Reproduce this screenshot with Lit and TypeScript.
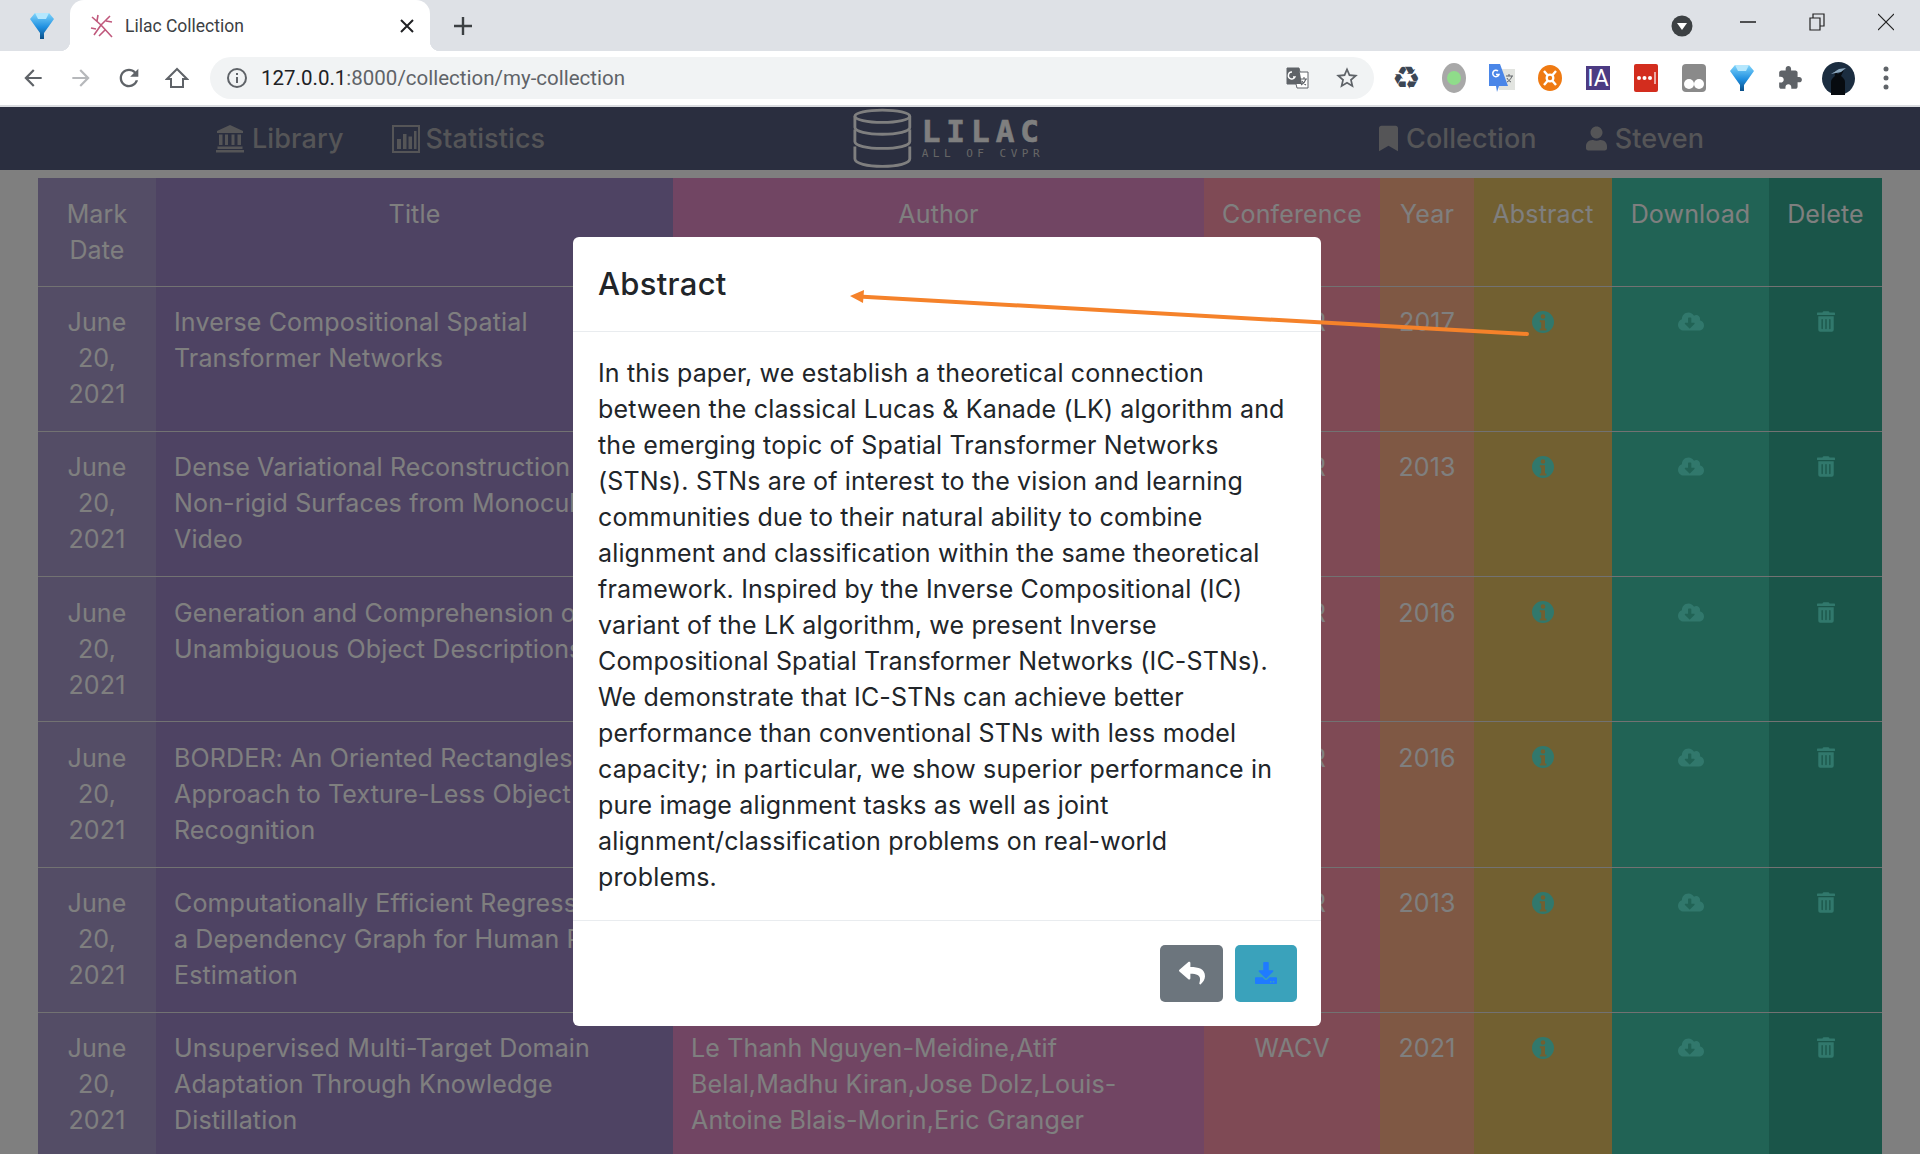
import { LitElement, css, html, svg } from 'lit'
import { customElement } from 'lit/decorators.js'

interface Paper {
  title: string[]
  author: string[]
  conf: string
  year: string
}

const papers: Paper[] = [
  { title: ['Inverse Compositional Spatial', 'Transformer Networks'], author: [], conf: 'CVPR', year: '2017' },
  {
    title: ['Dense Variational Reconstruction of', 'Non-rigid Surfaces from Monocular', 'Video'],
    author: [],
    conf: 'CVPR',
    year: '2013',
  },
  { title: ['Generation and Comprehension of', 'Unambiguous Object Descriptions'], author: [], conf: 'CVPR', year: '2016' },
  {
    title: ['BORDER: An Oriented Rectangles', 'Approach to Texture-Less Object', 'Recognition'],
    author: [],
    conf: 'CVPR',
    year: '2016',
  },
  {
    title: ['Computationally Efficient Regression on', 'a Dependency Graph for Human Pose', 'Estimation'],
    author: [],
    conf: 'CVPR',
    year: '2013',
  },
  {
    title: ['Unsupervised Multi-Target Domain', 'Adaptation Through Knowledge', 'Distillation'],
    author: ['Le Thanh Nguyen-Meidine,Atif', 'Belal,Madhu Kiran,Jose Dolz,Louis-', 'Antoine Blais-Morin,Eric Granger'],
    conf: 'WACV',
    year: '2021',
  },
]

const abstractLines = [
  'In this paper, we establish a theoretical connection',
  'between the classical Lucas & Kanade (LK) algorithm and',
  'the emerging topic of Spatial Transformer Networks',
  '(STNs). STNs are of interest to the vision and learning',
  'communities due to their natural ability to combine',
  'alignment and classification within the same theoretical',
  'framework. Inspired by the Inverse Compositional (IC)',
  'variant of the LK algorithm, we present Inverse',
  'Compositional Spatial Transformer Networks (IC-STNs).',
  'We demonstrate that IC-STNs can achieve better',
  'performance than conventional STNs with less model',
  'capacity; in particular, we show superior performance in',
  'pure image alignment tasks as well as joint',
  'alignment/classification problems on real-world',
  'problems.',
]

const icon = (w: number, h: number, vw: number, vh: number, d: string) => html`
  <svg class="ic" width=${w} height=${h} viewBox="0 0 ${vw} ${vh}" fill="currentColor" fill-rule="evenodd"><path d=${d}></path></svg>
`

const INFO =
  'M11 0a11 11 0 1 0 0 22a11 11 0 1 0 0-22zM11 3.200a2.300 2.300 0 1 1 0 4.600a2.300 2.300 0 1 1 0-4.600zM7.800 9.200h5.200v8.200h1.400v2H7.800v-2h1.400v-6.200H7.800z'
const CLOUD =
  'M537.6 226.6c4.1-10.7 6.4-22.4 6.4-34.6 0-53-43-96-96-96-19.7 0-38.1 6-53.3 16.2C367 64.2 315.3 32 256 32c-88.4 0-160 71.6-160 160 0 2.7.1 5.4.2 8.1C40.2 219.8 0 273.2 0 336c0 79.5 64.5 144 144 144h368c70.7 0 128-57.3 128-128 0-61.9-44-113.6-102.4-125.4zm-132.9 88.7L299.3 420.7c-6.2 6.2-16.4 6.2-22.6 0L171.3 315.3c-10.1-10.1-2.9-27.3 11.3-27.3H248V176c0-8.8 7.2-16 16-16h48c8.8 0 16 7.2 16 16v112h65.4c14.2 0 21.4 17.2 11.3 27.3z'
const TRASH =
  'M32 464a48 48 0 0 0 48 48h288a48 48 0 0 0 48-48V128H32zm272-256a16 16 0 0 1 32 0v224a16 16 0 0 1-32 0zm-96 0a16 16 0 0 1 32 0v224a16 16 0 0 1-32 0zm-96 0a16 16 0 0 1 32 0v224a16 16 0 0 1-32 0zM432 32H312l-9.4-18.7A24 24 0 0 0 281.1 0H166.8a23.72 23.72 0 0 0-21.4 13.3L136 32H16A16 16 0 0 0 0 48v32a16 16 0 0 0 16 16h416a16 16 0 0 0 16-16V48a16 16 0 0 0-16-16z'
const BOOKMARK = 'M0 512V48C0 21.49 21.49 0 48 0h288c26.51 0 48 21.49 48 48v464L192 400 0 512z'
const USER =
  'M224 256c70.7 0 128-57.3 128-128S294.7 0 224 0 96 57.3 96 128s57.3 128 128 128zm89.6 32h-16.7c-22.2 10.2-46.9 16-72.9 16s-50.6-5.8-72.9-16h-16.7C60.2 288 0 348.2 0 422.4V464c0 26.5 21.5 48 48 48h352c26.5 0 48-21.5 48-48v-41.6c0-74.2-60.2-134.4-134.4-134.4z'
const REPLY =
  'M8.309 189.836L184.313 37.851C199.719 24.546 224 35.347 224 56.015v80.053c160.629 1.839 288 34.032 288 186.258 0 61.441-39.581 122.309-83.333 154.132-13.653 9.931-33.111-2.533-28.077-18.631 45.344-145.012-21.507-183.51-176.59-185.742V360c0 20.7-24.3 31.453-39.687 18.164l-176.004-152c-11.071-9.562-11.086-26.753 0-36.328z'
const DOWNLOAD =
  'M216 0h80c13.3 0 24 10.7 24 24v168h87.7c17.8 0 26.7 21.5 14.1 34.1L269.7 378.3c-7.5 7.5-19.8 7.5-27.3 0L90.1 226.1c-12.6-12.6-3.7-34.1 14.1-34.1H192V24c0-13.3 10.7-24 24-24zM512 376v112c0 13.3-10.7 24-24 24H24c-13.3 0-24-10.7-24-24V376c0-13.3 10.7-24 24-24h146.7l49 49c20.1 20.1 52.5 20.1 72.6 0l49-49H488c13.3 0 24 10.7 24 24zM388 464c0-11-9-20-20-20s-20 9-20 20 9 20 20 20 20-9 20-20zM452 464c0-11-9-20-20-20s-20 9-20 20 9 20 20 20 20-9 20-20z'
const BANK =
  'M14 1L1 7v2h26V7L14 1zM3 10.500h3.500V21H3zM9 10.500h3V21H9zM15.500 10.500h3V21h-3zM21.500 10.500H25V21h-3.500zM1.500 22.500h25V25h-25zM0 26h28v2.500H0z'
const CHART =
  'M0 0h28v28H0zM2 2v24h24V2zM5 14h4v10H5zM11 9h3.500v15H11zM16.500 11.500H20V24h-3.500zM22 6h2.500v18H22z'
const BACK = 'M20 11H7.830l5.590-5.590L12 4l-8 8 8 8 1.410-1.410L7.830 13H20v-2z'
const FORWARD = 'M4 11h12.170l-5.590-5.590L12 4l8 8-8 8-1.410-1.410L16.170 13H4v-2z'
const RELOAD =
  'M17.650 6.350C16.200 4.900 14.210 4 12 4c-4.420 0-7.990 3.580-7.990 8s3.570 8 7.990 8c3.730 0 6.840-2.550 7.730-6h-2.080c-.82 2.330-3.040 4-5.650 4-3.310 0-6-2.690-6-6s2.690-6 6-6c1.660 0 3.140.69 4.220 1.780L13 11h7V4l-2.350 2.350z'
const STAR =
  'M22 9.240l-7.190-.62L12 2 9.190 8.630 2 9.240l5.460 4.730L5.820 21 12 17.270 18.180 21l-1.630-7.030L22 9.240zM12 15.400l-3.760 2.270 1-4.280-3.320-2.880 4.380-.38L12 6.100l1.710 4.040 4.380.38-3.320 2.880 1 4.280L12 15.400z'
const PUZZLE =
  'M20.500 11H19V7c0-1.100-.9-2-2-2h-4V3.500C13 2.120 11.880 1 10.500 1S8 2.120 8 3.500V5H4c-1.100 0-1.990.9-1.990 2v3.800H3.500c1.490 0 2.700 1.210 2.700 2.700s-1.210 2.700-2.700 2.700H2V20c0 1.100.9 2 2 2h3.800v-1.500c0-1.490 1.210-2.700 2.700-2.700 1.490 0 2.700 1.210 2.700 2.700V22H17c1.100 0 2-.9 2-2v-4h1.500c1.380 0 2.500-1.120 2.500-2.500S21.880 11 20.500 11z'

const funnel = (id: string) => html`
  <svg width="24" height="30" viewBox="0 0 24 30">
    <defs>
      ${svg`<linearGradient id=${id} x1="0" y1="0" x2="0" y2="1">
        <stop offset="0" stop-color="#7fd4fb"></stop>
        <stop offset="0.55" stop-color="#1f8fe0"></stop>
        <stop offset="1" stop-color="#0b4f88"></stop>
      </linearGradient>`}
    </defs>
    <path d="M5 2h14l5 6-10 14v6h-4v-6L0 8z" fill="url(#${id})"></path>
    <path d="M5 2h14l-3 6H8z" fill="#b5e7fd"></path>
  </svg>
`

@customElement('app-root')
export class AppRoot extends LitElement {
  static styles = css`
    :host {
      display: block;
      position: relative;
      width: 1920px;
      height: 1154px;
      overflow: hidden;
      background: #fff;
      font-family: Inter, 'Noto Sans', sans-serif;
      color: #212529;
    }

    .ic {
      display: block;
      flex: none;
    }

    .tabs {
      display: flex;
      align-items: stretch;
      height: 51px;
      background: #dee1e6;
    }

    .pinned {
      display: flex;
      align-items: center;
      justify-content: center;
      width: 70px;
      padding-left: 14px;
      box-sizing: border-box;
    }

    .tab {
      position: relative;
      display: flex;
      align-items: center;
      width: 360px;
      padding: 0 16px 0 20px;
      box-sizing: border-box;
      background: #fff;
      border-radius: 14px 14px 0 0;
      font: 17.500px Roboto, sans-serif;
      color: #3c4043;
    }

    .tab::before,
    .tab::after {
      content: '';
      position: absolute;
      bottom: 0;
      width: 10px;
      height: 10px;
    }

    .tab::before {
      left: -10px;
      background: radial-gradient(circle at 0 0, #dee1e6 10px, #fff 10.500px);
    }

    .tab::after {
      right: -10px;
      background: radial-gradient(circle at 100% 0, #dee1e6 10px, #fff 10.500px);
    }

    .tab .name {
      flex: 1;
      margin-left: 11px;
    }

    .new-tab {
      display: flex;
      align-items: center;
      justify-content: center;
      width: 40px;
      margin-left: 13px;
    }

    .spacer {
      flex: 1;
    }

    .win {
      display: flex;
      align-items: center;
      justify-content: center;
      width: 69px;
      padding-bottom: 7px;
    }

    .profile-arrow {
      display: flex;
      align-items: center;
      justify-content: center;
      margin-right: 20px;
    }

    .toolbar {
      display: flex;
      align-items: center;
      height: 54px;
      padding-left: 9px;
      background: #fff;
      border-bottom: 2px solid #dadce0;
      color: #5f6368;
    }

    .tool {
      display: flex;
      align-items: center;
      justify-content: center;
      width: 48px;
      height: 48px;
      flex: none;
    }

    .tool.off {
      color: #b6b8bb;
    }

    .tool.star {
      width: 54px;
      margin-left: 10px;
    }

    .pill {
      display: flex;
      align-items: center;
      width: 1164px;
      height: 42px;
      margin: 0 8px 0 9px;
      padding-left: 16px;
      box-sizing: border-box;
      border-radius: 21px;
      background: #f1f3f4;
      font: 20.500px Roboto, sans-serif;
      color: #5f6368;
    }

    .pill .url {
      flex: 1;
      margin-left: 13px;
    }

    .pill .url b {
      font-weight: 400;
      color: #202124;
    }

    .recycle {
      font: 32px 'DejaVu Sans', sans-serif;
      color: #3c4654;
    }

    .ia {
      display: flex;
      align-items: center;
      justify-content: center;
      width: 24px;
      height: 24px;
      background: #4c3b83;
      color: #fff;
      font: 23px Roboto, sans-serif;
    }

    .site {
      position: relative;
      height: 1047px;
      overflow: hidden;
      background: #fff;
    }

    .nav {
      display: flex;
      align-items: center;
      height: 63px;
      padding-left: 216px;
      background: #545c7e;
      color: #aaaaae;
      font-size: 27px;
      letter-spacing: 0.100px;
      font-weight: 500;
    }

    .nav-item {
      display: flex;
      align-items: center;
      gap: 8px;
    }

    .nav-item.stat {
      gap: 6px;
    }

    .nav-left {
      display: flex;
      gap: 48px;
      width: 637px;
    }

    .nav-right {
      display: flex;
      gap: 49px;
      margin-left: 334px;
    }

    .logo {
      display: flex;
      align-items: flex-start;
      gap: 10px;
      width: 192px;
      height: 63px;
      color: #fff;
    }

    .logo-text {
      display: flex;
      flex-direction: column;
      padding-top: 9px;
      white-space: nowrap;
    }

    .logo-name {
      font: bold 31px/30px 'DejaVu Sans Mono', monospace;
      letter-spacing: 6px;
      -webkit-text-stroke: 0.600px #fff;
      color: #fff;
    }

    .logo-sub {
      margin-top: 1px;
      font: 11px/13px 'DejaVu Sans Mono', monospace;
      letter-spacing: 4.500px;
      color: #ccc;
    }

    .table {
      margin: 8px 0 0 38px;
      width: 1844px;
      font-size: 25px;
      letter-spacing: 0.150px;
      line-height: 36px;
      color: #fff;
    }

    .row {
      display: grid;
      grid-template-columns: 118px 517px 531px 176px 94px 138px 157px 113px;
      height: 145.300px;
      box-sizing: border-box;
      border-bottom: 1px solid #e4e4e4;
    }

    .row.head {
      height: 108.500px;
    }

    .cell {
      padding: 17.500px 18px 18px;
      white-space: nowrap;
      overflow: hidden;
    }

    .center {
      text-align: center;
    }

    .c0 { background: #a89acc; }
    .c1 { background: #9c86c6; }
    .c2 { background: #e28ac6; }
    .c3 { background: #fe94aa; }
    .c4 { background: #feb088; }
    .c5 { background: #e4c062; }
    .c6 { background: #42c6aa; }
    .c7 { background: #34aa92; }

    .glyph {
      display: flex;
      align-items: center;
      justify-content: center;
      height: 35px;
      color: #62f0d8;
    }

    .backdrop {
      position: absolute;
      inset: 0;
      background: rgb(0 0 0 / 50%);
    }

    .modal {
      position: absolute;
      top: 130px;
      left: 573px;
      display: flex;
      flex-direction: column;
      width: 748px;
      background: #fff;
      border-radius: 6px;
    }

    .modal-head {
      height: 92px;
      padding: 0 25px 2px;
      display: flex;
      align-items: center;
      border-bottom: 1px solid #e9ecef;
      font-size: 31px;
      letter-spacing: 0.300px;
      font-weight: 500;
    }

    .modal-body {
      padding: 23px 25px 25px;
      font-size: 25px;
      letter-spacing: 0.150px;
      line-height: 36px;
      white-space: nowrap;
    }

    .modal-foot {
      display: flex;
      justify-content: flex-end;
      gap: 12px;
      padding: 24px;
      border-top: 1px solid #e9ecef;
    }

    .btn {
      display: flex;
      align-items: center;
      justify-content: center;
      width: 62px;
      height: 55px;
      padding-bottom: 2px;
      border-radius: 5px;
    }

    .btn.back {
      width: 63px;
      background: #6c757d;
      color: #fff;
    }

    .btn.save {
      background: #3aa2bb;
      color: #1f7bff;
    }

    .arrow {
      position: absolute;
      top: 0;
      left: 0;
      pointer-events: none;
    }
  `

  private renderChrome() {
    return html`
      <div class="tabs">
        <div class="pinned">${funnel('fa')}</div>
        <div class="tab">
          <svg width="24" height="26" viewBox="0 0 24 26" fill="none" stroke="#c0587c" stroke-width="1.600">
            <path d="M2 4l9 8 11 12M11 12l9-9M11 12L4 22M7 8l1-6M15 17l-6 6M16 8l6 1M6 16l-5-1"></path>
          </svg>
          <span class="name">Lilac Collection</span>
          <svg width="14" height="14" viewBox="0 0 14 14" stroke="#202124" stroke-width="2"><path d="M1 1l12 12M13 1L1 13"></path></svg>
        </div>
        <div class="new-tab">
          <svg width="18" height="18" viewBox="0 0 18 18" stroke="#3c4043" stroke-width="2.400"><path d="M9 0v18M0 9h18"></path></svg>
        </div>
        <div class="spacer"></div>
        <div class="profile-arrow">
          <svg width="22" height="22" viewBox="0 0 22 22"><circle cx="11" cy="11" r="10.500" fill="#3c4043"></circle><path d="M6 8h10l-5 7z" fill="#fff"></path></svg>
        </div>
        <div class="win"><svg width="16" height="2" viewBox="0 0 16 2"><path d="M0 1h16" stroke="#000" stroke-width="1.300"></path></svg></div>
        <div class="win">
          <svg width="16" height="18" viewBox="0 0 16 18" fill="none" stroke="#222" stroke-width="1.200"><path d="M1 5h10v12H1zM4 5V1h11v12h-4"></path></svg>
        </div>
        <div class="win"><svg width="16" height="18" viewBox="0 0 16 18" stroke="#222" stroke-width="1.100"><path d="M0 1l16 16M16 1L0 17"></path></svg></div>
      </div>
      <div class="toolbar">
        <div class="tool">${icon(26, 26, 24, 24, BACK)}</div>
        <div class="tool off">${icon(26, 26, 24, 24, FORWARD)}</div>
        <div class="tool">${icon(28, 28, 24, 24, RELOAD)}</div>
        <div class="tool">
          <svg width="24" height="24" viewBox="0 0 24 24" fill="none" stroke="currentColor" stroke-width="2"><path d="M12 3L2 13h4v8h12v-8h4z"></path></svg>
        </div>
        <div class="pill">
          <svg width="22" height="22" viewBox="0 0 22 22" fill="none" stroke="currentColor" stroke-width="2">
            <circle cx="11" cy="11" r="9"></circle>
            <path d="M11 10v6M11 6v2"></path>
          </svg>
          <span class="url"><b>127.0.0.1</b>:8000/collection/my-collection</span>
          <svg width="24" height="24" viewBox="0 0 24 24">
            <path d="M1 2h12l1 4h8v16H11l-1-4H1z" fill="#fff" stroke="#5f6368"></path>
            <path d="M1 2h12l3 16H1z" fill="#5f6368"></path>
            <path d="M6 6a3.500 3.500 0 1 0 3 5H7" fill="none" stroke="#fff" stroke-width="1.400"></path>
            <path d="M15 13h6M18 11v2M20 13c-1 3-3 5-5 6M16 15c1 2 2 3 4 4" fill="none" stroke="#5f6368" stroke-width="1.100"></path>
          </svg>
          <div class="tool star">${icon(26, 26, 24, 24, STAR)}</div>
        </div>
        <div class="tool recycle">♻</div>
        <div class="tool">
          <svg width="24" height="30" viewBox="0 0 24 30"><ellipse cx="12" cy="15" rx="12" ry="15" fill="#a8a8a8"></ellipse><circle cx="12" cy="15" r="7" fill="#8fdc8a"></circle></svg>
        </div>
        <div class="tool">
          <svg width="26" height="30" viewBox="0 0 26 30">
            <path d="M8 6h18v21H10z" fill="#e2e4e0"></path>
            <path d="M0 1h11l8 22H10l-2 6-1-6H0z" fill="#4a86e8"></path>
            <path d="M9 8a3.200 3.200 0 1 0 1 3.500H7" fill="none" stroke="#fff" stroke-width="1.500"></path>
            <path d="M17 13h7M20 11v2M23 13c-1 3-3 5-5 6M18 15c1 2 2 3 4 4" fill="none" stroke="#5f6368" stroke-width="1"></path>
          </svg>
        </div>
        <div class="tool">
          <svg width="24" height="26" viewBox="0 0 24 26">
            <ellipse cx="12" cy="13" rx="12" ry="13" fill="#ef7a12"></ellipse>
            <path d="M6 6l12 14M18 6L6 20" stroke="#fff" stroke-width="2.400"></path>
            <circle cx="12" cy="13" r="4.500" fill="#fff"></circle>
            <circle cx="12" cy="13" r="2.200" fill="#ef7a12"></circle>
          </svg>
        </div>
        <div class="tool"><div class="ia">IA</div></div>
        <div class="tool">
          <svg width="24" height="28" viewBox="0 0 24 28">
            <rect width="24" height="28" rx="2" fill="#d32d1e"></rect>
            <circle cx="5" cy="14" r="2" fill="#fff"></circle>
            <circle cx="10.500" cy="14" r="2" fill="#fff"></circle>
            <circle cx="16" cy="14" r="2" fill="#fff"></circle>
            <path d="M21 8v12" stroke="#fff" stroke-width="1.200"></path>
          </svg>
        </div>
        <div class="tool">
          <svg width="24" height="28" viewBox="0 0 24 28"><rect width="24" height="28" rx="4" fill="#8a8a8a"></rect><circle cx="7" cy="20" r="5" fill="#fff"></circle><circle cx="17" cy="20" r="5" fill="#fff"></circle></svg>
        </div>
        <div class="tool">${funnel('fb')}</div>
        <div class="tool">${icon(26, 26, 24, 24, PUZZLE)}</div>
        <div class="tool">
          <svg width="33" height="33" viewBox="0 0 33 33">
            <circle cx="16.500" cy="16.500" r="16.500" fill="#1b2d40"></circle>
            <path d="M9 33V20c0-3 2-4 4-6l-1-5 4 3 6-4-3 6c2 2 4 3 4 6v13z" fill="#070b10"></path>
            <path d="M9 12l8-5 7-1-5 4z" fill="#8aa6bc"></path>
          </svg>
        </div>
        <div class="tool">
          <svg width="6" height="24" viewBox="0 0 6 24" fill="currentColor"><circle cx="3" cy="3" r="2.500"></circle><circle cx="3" cy="12" r="2.500"></circle><circle cx="3" cy="21" r="2.500"></circle></svg>
        </div>
      </div>
    `
  }

  private renderNav() {
    return html`
      <div class="nav">
        <div class="nav-left">
          <div class="nav-item">${icon(28, 29, 28, 29, BANK)}<span>Library</span></div>
          <div class="nav-item stat">${icon(28, 28, 28, 28, CHART)}<span>Statistics</span></div>
        </div>
        <div class="logo">
          <svg width="62" height="63" viewBox="0 0 62 63" fill="none" stroke="#fff" stroke-width="3">
            <ellipse cx="31" cy="8" rx="29" ry="6.500"></ellipse>
            <path d="M2 8v12c0 4 13 7 29 7s29-3 29-7V8"></path>
            <path d="M2 22v13c0 4 13 7 29 7s29-3 29-7V22"></path>
            <path d="M2 40v13c0 5 13 8 29 8s29-3 29-8V40"></path>
          </svg>
          <div class="logo-text">
            <span class="logo-name">LILAC</span>
            <span class="logo-sub">ALL OF CVPR</span>
          </div>
        </div>
        <div class="nav-right">
          <div class="nav-item">${icon(19, 27, 384, 512, BOOKMARK)}<span>Collection</span></div>
          <div class="nav-item">${icon(21, 25, 448, 512, USER)}<span>Steven</span></div>
        </div>
      </div>
    `
  }

  private renderTable() {
    const heads = ['Title', 'Author', 'Conference', 'Year', 'Abstract', 'Download', 'Delete']
    return html`
      <div class="table">
        <div class="row head">
          <div class="cell center c0">Mark<br />Date</div>
          ${heads.map((label, i) => html`<div class="cell center c${i + 1}">${label}</div>`)}
        </div>
        ${papers.map(
          (p) => html`
            <div class="row">
              <div class="cell center c0">June<br />20,<br />2021</div>
              <div class="cell c1">${p.title.map((line) => html`${line}<br />`)}</div>
              <div class="cell c2">${p.author.map((line) => html`${line}<br />`)}</div>
              <div class="cell center c3">${p.conf}</div>
              <div class="cell center c4">${p.year}</div>
              <div class="cell c5"><div class="glyph">${icon(22, 22, 22, 22, INFO)}</div></div>
              <div class="cell c6"><div class="glyph">${icon(26, 21, 640, 512, CLOUD)}</div></div>
              <div class="cell c7"><div class="glyph">${icon(18, 21, 448, 512, TRASH)}</div></div>
            </div>
          `,
        )}
      </div>
    `
  }

  render() {
    return html`
      ${this.renderChrome()}
      <div class="site">
        ${this.renderNav()} ${this.renderTable()}
        <div class="backdrop"></div>
        <div class="modal">
          <div class="modal-head">Abstract</div>
          <div class="modal-body">${abstractLines.map((line) => html`${line}<br />`)}</div>
          <div class="modal-foot">
            <div class="btn back">${icon(26, 26, 512, 512, REPLY)}</div>
            <div class="btn save">${icon(22, 22, 512, 512, DOWNLOAD)}</div>
          </div>
        </div>
      </div>
      <svg class="arrow" width="1920" height="1154" viewBox="0 0 1920 1154">
        <path d="M863 296.700L1527 334" stroke="#f5822a" stroke-width="4" stroke-linecap="round"></path>
        <path d="M850 296l14-6-1 13z" fill="#f5822a"></path>
      </svg>
    `
  }
}
